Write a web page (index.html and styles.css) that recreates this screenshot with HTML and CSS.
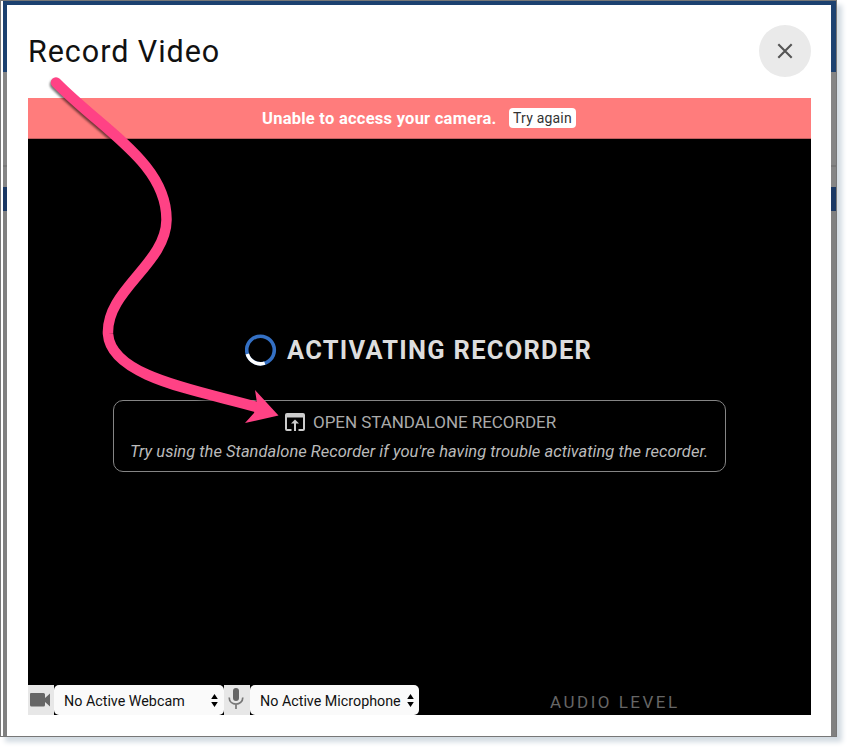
FILE: index.html
```html
<!DOCTYPE html>
<html lang="en">
<head>
<meta charset="utf-8">
<title>Record Video</title>
<link rel="stylesheet" href="styles.css">
</head>
<body>
<div class="window">
  <div class="backdrop">
    <section class="modal">
      <header class="modal-header">
        <h1 class="title">Record Video</h1>
        <button class="close" aria-label="Close">
          <svg width="16" height="16" viewBox="0 0 16 16"><path d="M1.3 1.3 14.7 14.7M14.7 1.3 1.3 14.7" stroke="#555" stroke-width="2.1" fill="none"/></svg>
        </button>
      </header>
      <div class="recorder">
        <div class="alert">
          <span class="alert-text">Unable to access your camera.</span>
          <button class="retry">Try again</button>
        </div>
        <div class="stage">
          <div class="status">
            <svg class="spinner" width="32" height="32" viewBox="0 0 32 32" fill="none" stroke-width="3.6"><circle cx="15.500" cy="16" r="13.8" stroke="#3470c4"/><path d="M2.3 20A13.8 13.8 0 0 0 19.8 29.1" stroke="#fff"/></svg>
            <span class="status-text">ACTIVATING RECORDER</span>
          </div>
          <div class="standalone">
            <div class="standalone-link">
              <svg width="20" height="18" viewBox="0 0 20 18"><path fill="#ccc" d="M2 0H18Q20 0 20 2V16Q20 18 18 18H13.5V16H18V4.5H2V16H6.5V18H2Q0 18 0 16V2Q0 0 2 0ZM10 6.5 14 10.5H11V18H9V10.5H6Z"/></svg>
              <span class="standalone-label">OPEN STANDALONE RECORDER</span>
            </div>
            <div class="hint">Try using the Standalone Recorder if you're having trouble activating the recorder.</div>
          </div>
        </div>
        <footer class="controls">
          <span class="device-icon"><svg width="20" height="14" viewBox="0 0 20 14"><path fill="#666" d="M1 0H13.5Q15 0 15 1.5V5L20 0.5V13.5L15 9V12Q15 13.5 13.5 13.5H1.5Q0 13.5 0 12V1Q0 0 1 0Z"/></svg></span>
          <span class="select webcam"><span class="webcam-text">No Active Webcam</span><svg width="7" height="13" viewBox="0 0 7 13"><path d="M3.5 0 6.8 5H.2ZM3.5 13 6.8 8H.2Z"/></svg></span>
          <span class="device-icon mic"><svg width="16" height="22" viewBox="0 0 16 22"><rect x="5" y="0" width="6" height="13" rx="3" fill="#666"/><path d="M1.2 9.5C1.2 18.2 14.8 18.2 14.8 9.5M8 16V21" fill="none" stroke="#777" stroke-width="1.7"/></svg></span>
          <span class="select microphone"><span class="microphone-text">No Active Microphone</span><svg width="7" height="13" viewBox="0 0 7 13"><path d="M3.5 0 6.8 5H.2ZM3.5 13 6.8 8H.2Z"/></svg></span>
          <span class="audio">AUDIO LEVEL</span>
        </footer>
      </div>
    </section>
  </div>
</div>
<svg class="arrow" width="847" height="747" viewBox="0 0 847 747">
  <path d="M56 82.5C105 132 167 164 166.500 220C166 264 106 290 108 334C111 378 202 391 260 408" fill="none" stroke="#ff4285" stroke-width="10.5" stroke-linecap="round"/>
  <path d="M278.500 415.500 255 390 257 403 254 413 245 423Z" fill="#ff4285"/>
</svg>
</body>
</html>
```

FILE: styles.css
```css
* { box-sizing: border-box; }
body { margin: 0; width: 847px; height: 747px; overflow: hidden; background: #fff; font-family: Roboto, sans-serif; }
button { font-family: inherit; border: 0; padding: 0; }
svg { display: block; flex: none; }
.window { width: 837px; height: 737px; border: 1px solid #777; padding-left: 2px; background: #fff; box-shadow: 5px 5px 5px #d3dbe2; }
.backdrop { height: 735px; padding: 4px 5px 0 4px; background: linear-gradient(#1c4170 0 71px, #858585 71px 164px, #777 164px 166px, #858585 166px 186px, #1a3864 186px 210px, #808080 210px); }
.modal { height: 731px; padding: 20px 20px 0 21px; background: #fff; }
.modal-header { display: flex; justify-content: space-between; height: 73px; }
.title { margin: 8px 0 0; font-size: 30.5px; line-height: 38px; font-weight: 400; letter-spacing: .95px; color: #111; white-space: nowrap; }
.close { display: flex; align-items: center; justify-content: center; width: 52px; height: 52px; border-radius: 50%; background: #eaeaea; }
.recorder { display: flex; flex-direction: column; width: 783px; height: 617px; background: #000; }
.alert { display: flex; align-items: center; height: 41px; padding-left: 234px; background: #ff7c7c; border-bottom: 1px solid #c06060; white-space: nowrap; }
.alert-text { width: 247px; font-size: 16.5px; font-weight: 700; letter-spacing: .25px; color: #fff; }
.retry { width: 67px; height: 20px; border-radius: 4px; background: #fff; font-size: 14px; line-height: 20px; letter-spacing: .2px; color: #333; }
.stage { flex: 1; display: flex; flex-direction: column; align-items: flex-start; padding-top: 195px; white-space: nowrap; }
.status { display: flex; align-items: center; gap: 10px; height: 32px; margin-left: 217px; }
.status-text { font-size: 25.5px; line-height: 32px; font-weight: 700; letter-spacing: 1.25px; color: #ddd; }
.standalone { width: 613px; height: 72px; margin: 34px 0 0 85px; border: 1px solid #858585; border-radius: 10px; }
.standalone-link { display: flex; align-items: center; gap: 8px; height: 22px; margin: 10px 0 0 171px; }
.standalone-label { font-size: 17px; letter-spacing: -.05px; color: #aaa; }
.hint { margin: 9px 0 0 16px; font-size: 16.5px; line-height: 20px; letter-spacing: .035px; font-style: italic; color: #bbb; }
.controls { display: flex; height: 30px; white-space: nowrap; }
.device-icon { display: flex; align-items: center; justify-content: center; width: 26px; background: #e7e7e7; }
.device-icon:first-child { padding-right: 2px; }
.mic { padding-right: 2px; padding-bottom: 2px; }
.select { display: flex; align-items: center; justify-content: space-between; height: 30px; border-radius: 5px; background: #fafafa; font-size: 14.3px; line-height: 20px; color: #111; }
.webcam-text, .microphone-text { padding-top: 2px; }
.webcam { width: 170px; padding: 0 6px 0 10px; }
.microphone { width: 169px; padding: 0 5px 0 10px; }
.audio { margin-left: 131px; font-size: 17px; line-height: 34px; letter-spacing: 2.5px; color: #666; }
.arrow { position: absolute; left: 0; top: 0; pointer-events: none; filter: drop-shadow(-1px 2px 1px rgba(0,0,0,.55)); }
```
